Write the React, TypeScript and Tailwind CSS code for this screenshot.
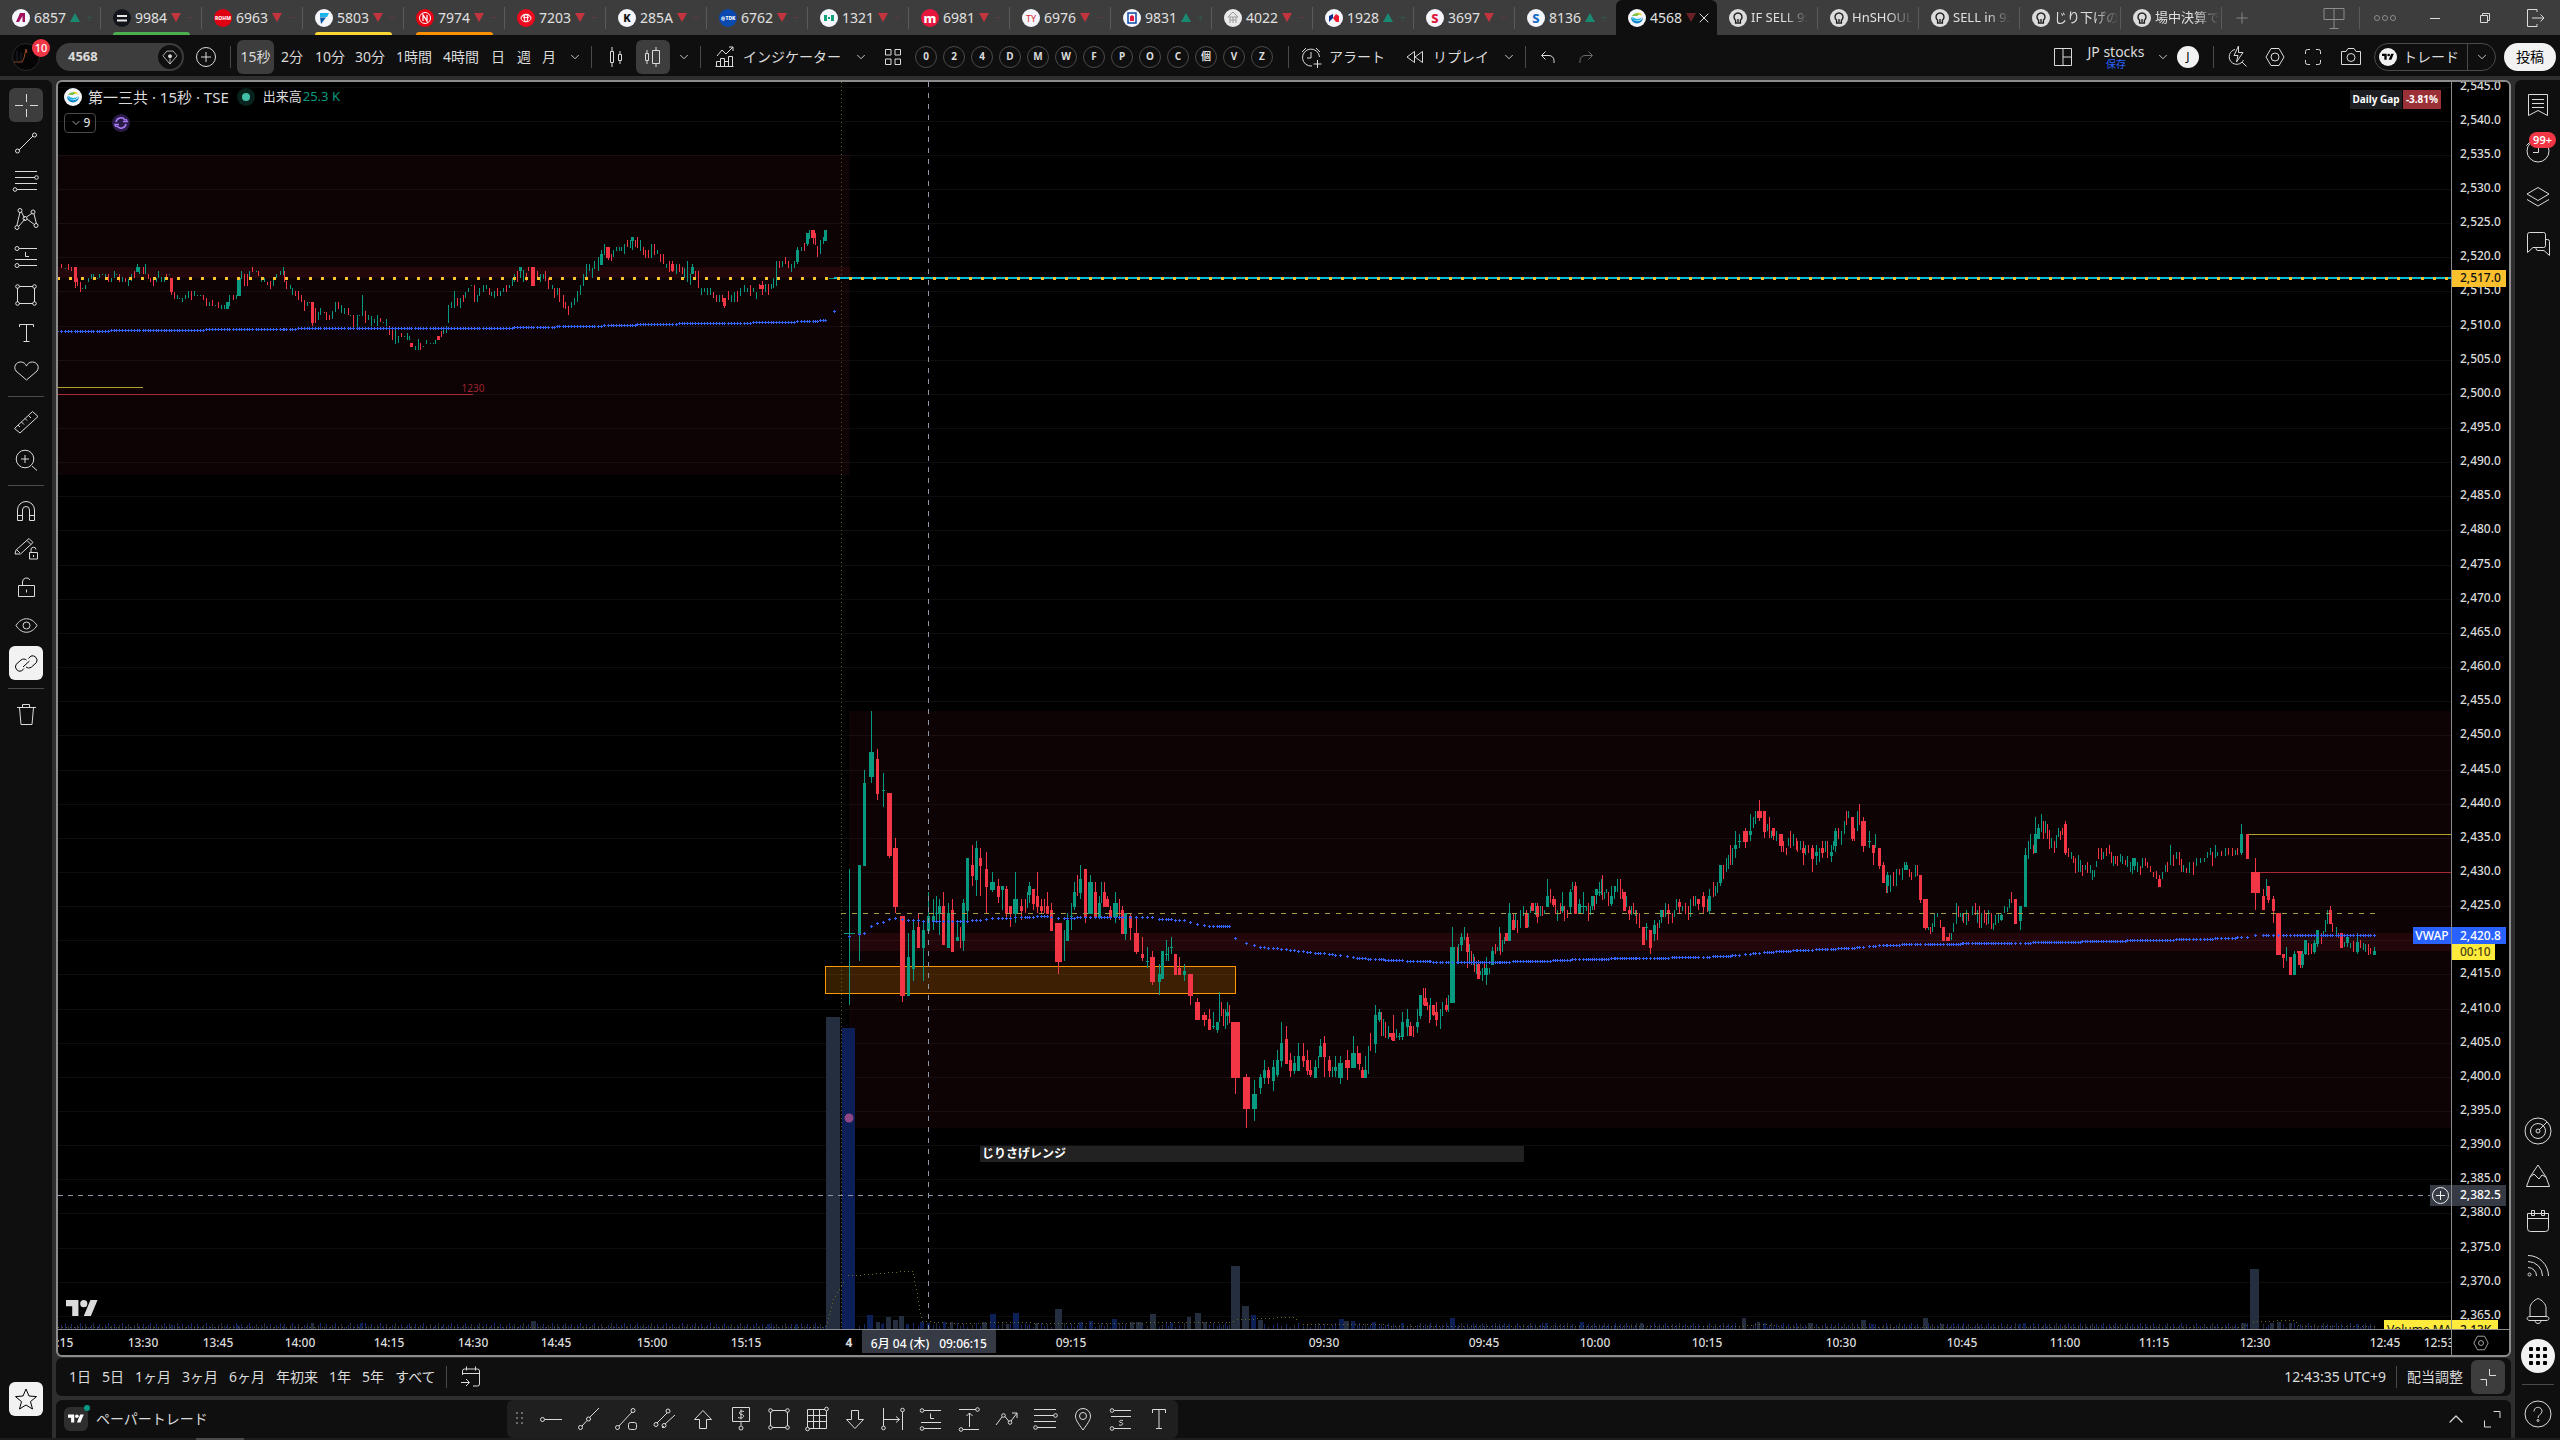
import React from 'react';
import clsx from 'clsx';
import { ChevronDown, ChevronUp, X, Plus } from 'lucide-react';

const UP = '#089981';
const DOWN = '#f23645';

/* ---------- icons ---------- */

interface IcoProps {
  d?: string;
  dots?: number[][];
  size?: number;
  fill?: string;
  children?: React.ReactNode;
}

// line icons share a 28px grid
function Ico({ d, dots = [], size = 28, fill = 'none', children }: IcoProps) {
  return (
    <svg width={size} height={size} viewBox="0 0 28 28" fill={fill} stroke="currentColor" className="shrink-0" aria-hidden="true">
      {d && <path d={d} />}
      {dots.map(([cx, cy, r], i) => <circle key={i} cx={cx} cy={cy} r={r || 1.5} />)}
      {children}
    </svg>
  );
}

const Down = ({ size = 14 }: { size?: number }) => <ChevronDown size={size} strokeWidth={1.5} className="shrink-0" />;

const TvMark = ({ size = 18 }: { size?: number }) => (
  <svg width={size} height={size} viewBox="0 0 36 28" fill="currentColor" aria-hidden="true">
    <path d="M14 22H7V11H0V4h14v18zM28 22h-8l7.5-18h8L28 22z" />
    <circle cx="20" cy="8" r="4" />
  </svg>
);

/* ---------- tabs ---------- */

interface Tab {
  name: string;
  dir?: 'up' | 'down';
  bg: string;
  line?: string;
  active?: boolean;
  logo: React.ReactNode;
}

const mark = (text: string, fill: string, size = 9) => (
  <text x="9" y={9 + size * 0.36} textAnchor="middle" fontSize={size} fontWeight="800" fill={fill}>{text}</text>
);

const bulb = (
  <g fill="none" stroke="#222" strokeWidth="1.4">
    <path d="M6.6 11.2a4 4 0 1 1 4.8 0V14H6.600z" />
    <path d="M9 10v3" />
  </g>
);

const tabs: Tab[] = [
  { name: '6857', dir: 'up', bg: '#f4f6fb', logo: <path d="M4 13 8 4h5v9h-2.500V7L7 13z" fill="#a0105f" /> },
  { name: '9984', dir: 'down', bg: '#12161c', line: 'bg-[#4caf50]', logo: <path d="M4 6h10v2H4zM4 10.500h10v2H4z" fill="#e8e8e8" /> },
  { name: '6963', dir: 'down', bg: '#e00012', logo: mark('ROHM', '#fff', 5) },
  { name: '5803', dir: 'down', bg: '#f4f6fb', line: 'bg-[#fdd835]', logo: <g><path d="M5 4h9l-2 4H5z" fill="#19b5ea" /><path d="M5 8.500h6L6 15z" fill="#0b57a4" /></g> },
  { name: '7974', dir: 'down', bg: '#e60012', line: 'bg-[#ff9100]', logo: <g fill="none" stroke="#fff"><circle cx="9" cy="9" r="5.500" /><path d="M7 12V6l4 6V6" strokeWidth="1.3" /></g> },
  { name: '7203', dir: 'down', bg: '#eb0a1e', logo: <g fill="none" stroke="#fff"><ellipse cx="9" cy="9" rx="5" ry="3.800" /><ellipse cx="9" cy="9" rx="1.800" ry="3.600" /><ellipse cx="9" cy="7.200" rx="3.500" ry="1.500" /></g> },
  { name: '285A', dir: 'down', bg: '#f4f6fb', logo: mark('K', '#111', 11) },
  { name: '6762', dir: 'down', bg: '#0a4ab0', logo: mark('⊕TDK', '#fff', 5) },
  { name: '1321', dir: 'down', bg: '#f4f6fb', logo: <path d="M4 6h3v6H4zM11 6h3v6h-3zM8 8h2v2H8z" fill="#12a277" /> },
  { name: '6981', dir: 'down', bg: '#e5173f', logo: mark('m', '#fff', 13) },
  { name: '6976', dir: 'down', bg: '#f4f6fb', logo: <text x="9" y="12.500" textAnchor="middle" fontSize="9" fill="#d8262c">TY</text> },
  { name: '9831', dir: 'up', bg: '#f4f6fb', logo: <g><path d="M5 4h8v10H5z" fill="none" stroke="#0d49a5" strokeWidth="1.500" /><path d="M7 7.500 9 6l2 1.500V12H7z" fill="#e5173f" /></g> },
  { name: '4022', dir: 'down', bg: '#e9e9e9', logo: <g fill="none" stroke="#9a9a9a"><path d="M9 3 4 8h10zM6 8v6M12 8v6M6 11h6M9 8v6" /></g> },
  { name: '1928', dir: 'up', bg: '#f4f6fb', logo: <g><path d="M4 13V7l4-2v4z" fill="#0b2f8a" /><path d="m8 9 3-4 3 2v6h-3z" fill="#ee1c2e" /></g> },
  { name: '3697', dir: 'down', bg: '#f4f6fb', logo: mark('S', '#e0173a', 13) },
  { name: '8136', dir: 'up', bg: '#f4f6fb', logo: mark('S', '#1c6fc4', 13) },
  { name: '4568', dir: 'down', bg: '#f4f6fb', active: true, logo: <DaiichiLogo /> },
  { name: 'IF SELL 9:', bg: '#dcdcdc', logo: bulb },
  { name: 'HnSHOUL', bg: '#dcdcdc', logo: bulb },
  { name: 'SELL in 9:', bg: '#dcdcdc', logo: bulb },
  { name: 'じり下げの', bg: '#dcdcdc', logo: bulb },
  { name: '場中決算で', bg: '#dcdcdc', logo: bulb },
];

function DaiichiLogo() {
  return (
    <g>
      <path d="M3 8c0 8.500 12 8.500 12 0-1 5-9 6-12 0z" fill="#0a86c9" />
      <path d="M4 7.500c0 5 7 6 10 1-3 2-7 2-10-1z" fill="#17b1e7" />
      <path d="M4 7c2-3 6-4 9-2-2 0-3 2-5 2z" fill="#7cc142" />
      <path d="M9 4c3-1 5 1 5 3-1-1-3-2-5-3z" fill="#f3d21a" />
    </g>
  );
}

function TabItem({ tab }: { tab: Tab }) {
  return (
    <button
      className={clsx(
        'relative flex h-[35px] w-[101px] shrink-0 items-center pl-3 text-sm whitespace-nowrap text-[#e0e0e0]',
        tab.active && 'rounded-t-md bg-[#0f0f0f]'
      )}
    >
      <svg width="18" height="18" viewBox="0 0 18 18" className="mr-1 shrink-0" aria-hidden="true">
        <circle cx="9" cy="9" r="9" fill={tab.bg} />
        {tab.logo}
      </svg>
      {tab.dir ? (
        <>
          <span>{tab.name}</span>
          <svg width="10" height="9" viewBox="0 0 10 9" className={clsx('ml-1', tab.active && 'opacity-50')} aria-hidden="true">
            {tab.dir === 'up' ? <path d="M5 0l5 9H0z" fill="#1a8a72" /> : <path d="M0 0h10L5 9z" fill="#c2343e" />}
          </svg>
          {tab.active ? (
            <X size={16} strokeWidth={1.5} className="shrink-0" />
          ) : (
            <span className={clsx('ml-1.5 text-xs opacity-30', tab.dir === 'up' ? 'text-[#1a8a72]' : 'text-[#c2343e]')}>
              {tab.dir === 'up' ? '+' : '−'}
            </span>
          )}
        </>
      ) : (
        <span className="mask-r-from-60% text-[13px]">{tab.name}</span>
      )}
      {tab.line && <span className={clsx('absolute bottom-0 left-3 h-[3px] w-[77px] rounded-t-sm', tab.line)} />}
      {!tab.active && tab.name !== '8136' && <span className="absolute top-[7px] right-0 h-[22px] w-px bg-[#5a5a5a]" />}
    </button>
  );
}

function TabBar() {
  return (
    <header className="flex h-[35px] shrink-0 items-center overflow-hidden bg-[#3d3d3d] text-[#8c8c8c]">
      {tabs.map((t) => <TabItem key={t.name} tab={t} />)}
      <button className="flex w-10 justify-center" title="新しいタブ"><Plus size={18} strokeWidth={1.2} /></button>
      <div className="flex-1" />
      <button className="flex w-[50px] justify-center" title="分割">
        <Ico d="M4 4.500h20v11H4zM14 4.500v20M9.500 24.500h9" />
      </button>
      <span className="h-[22px] w-px bg-[#5a5a5a]" />
      <button className="flex w-[50px] justify-center" title="その他">
        <Ico dots={[[6, 14, 2.5], [14, 14, 2.5], [22, 14, 2.5]]} />
      </button>
      <div className="flex text-[#dbdbdb]">
        <button className="flex w-[50px] justify-center" title="最小化"><Ico d="M9 14.500h10" /></button>
        <button className="flex w-[50px] justify-center" title="元のサイズ"><Ico d="M9.500 11.500h7v7h-7zM11.500 11.500v-2h7v7h-2" /></button>
        <button className="flex w-[50px] justify-center" title="終了"><Ico d="M16 8V5.500H6.500v17H16V20M11 14h12M19.500 10.500 23 14l-3.500 3.500" /></button>
      </div>
    </header>
  );
}

/* ---------- top toolbar ---------- */

const Sep = ({ className = '' }: { className?: string }) => <span className={clsx('h-[22px] w-px shrink-0 bg-[#4a4a4a]', className)} />;

const intervals = [
  ['15秒', 'w-[37px] bg-[#3d3d3d]'],
  ['2分', 'w-9'],
  ['10分', 'w-10'],
  ['30分', 'w-10'],
  ['1時間', 'w-12'],
  ['4時間', 'w-[46px]'],
  ['日', 'w-7'],
  ['週', 'w-6'],
  ['月', 'w-[26px]'],
];

const templates = ['0', '2', '4', 'D', 'M', 'W', 'F', 'P', 'O', 'C', '個', 'V', 'Z'];

function Toolbar() {
  return (
    <div className="flex h-[41px] shrink-0 items-center overflow-hidden bg-[#0f0f0f] pt-0.5 text-sm whitespace-nowrap text-[#dbdbdb]">
      <button className="relative flex w-14 shrink-0 pl-3" title="メニュー">
        <svg width="28" height="28" viewBox="0 0 28 28" aria-hidden="true">
          <circle cx="14" cy="14" r="13.500" fill="#050505" stroke="#2a2a2a" />
          <path d="M2 19h8l2-4 2-9 1 4" fill="none" stroke="#9c4a1f" />
          <path d="M5 8v12M9 10v9" stroke="#1c2530" />
        </svg>
        <span className="absolute -top-1 left-8 flex size-[18px] items-center justify-center rounded-full bg-[#f23645] text-[11px] font-medium text-white">10</span>
      </button>
      <button className="flex h-7 w-32 shrink-0 items-center justify-between rounded-full bg-[#3d3d3d] pr-0.5 pl-3 text-[13px] font-bold">
        4568
        <span className="flex size-6 items-center justify-center rounded-full bg-[#0f0f0f]">
          <Ico size={22} d="M10 6.500h8l5 6-9 10.500-9-10.500zM14 16v6.500"><circle cx="14" cy="13" r="2" fill="currentColor" /></Ico>
        </span>
      </button>
      <button className="flex w-11 shrink-0 justify-center" title="比較"><Ico d="M14 9v10M9 14h10"><circle cx="14" cy="14" r="9.500" /></Ico></button>
      <Sep className="mr-1.5 ml-0.5" />
      {intervals.map(([label, cls]) => (
        <button key={label} className={clsx('h-[34px] shrink-0 rounded-md', cls)}>{label}</button>
      ))}
      <button className="flex w-[26px] shrink-0 justify-center" title="時間足"><Down /></button>
      <Sep className="mr-1.5 ml-[3px]" />
      <button className="flex w-9 shrink-0 justify-center" title="ローソク足"><Ico d="M8.500 8.500h3v11h-3zM10 8.500V4M10 19.500V24M16.500 11.500h3v6h-3zM18 11.500V8M18 17.500V21" /></button>
      <button className="ml-0.5 flex h-[34px] w-[34px] shrink-0 items-center justify-center rounded-md bg-[#3d3d3d]" title="出来高ローソク足">
        <Ico d="M6.500 10.500h3v7h-3zM8 10.500V7M8 17.500V21M13.500 7.500h7v13h-7zM17 7.500V4M17 20.500V24" />
      </button>
      <button className="flex w-7 shrink-0 justify-center" title="チャートタイプ"><Down /></button>
      <Sep className="mr-1 ml-0.5" />
      <button className="flex w-36 shrink-0 items-center gap-1 pl-1.5">
        <Ico d="M5.500 23.500v-5h4v5M9.500 23.500v-8h4v8M13.500 23.500v-5h4v5M17.500 23.500v-10h4v10M4.500 23.500h18M6 13l5-6 4 4 7-7M18 4h4v4" />
        インジケーター
      </button>
      <button className="flex w-6 shrink-0 justify-center" title="お気に入り"><Down /></button>
      <button className="flex w-10 shrink-0 justify-center" title="テンプレート"><Ico d="M6.500 6.500h5.500v5.500H6.500zM16 6.500h5.500v5.500H16zM6.500 16h5.500v5.500H6.500zM16 16h5.500v5.500H16z" /></button>
      <div className="ml-0.5 flex shrink-0 gap-1.5">
        {templates.map((t) => (
          <button key={t} className="flex size-[22px] items-center justify-center rounded-full border border-[#4a4a4a] text-[10px] font-bold">{t}</button>
        ))}
      </div>
      <Sep className="mr-2 ml-[15px]" />
      <button className="flex shrink-0 items-center gap-1">
        <Ico d="M22.500 14A8.500 8.500 0 1 0 15 23M14 9v6h-4M5 9l4-4M23 9l-4-4M20.500 17v8M16.500 21h8" />
        アラート
      </button>
      <button className="ml-4 flex shrink-0 items-center gap-1">
        <Ico d="M13.500 8.500v11L6 14zM21.500 8.500v11L14 14z" />
        リプレイ
      </button>
      <button className="ml-1.5 flex w-7 shrink-0 justify-center" title="リプレイ設定"><Down /></button>
      <Sep className="mr-1.5 ml-0.5" />
      <button className="flex w-8 shrink-0 justify-center" title="元に戻す"><Ico d="M11.500 8.500 7.500 12.500l4 4M8 12.500h7a5 5 0 0 1 5 5V20" /></button>
      <button className="ml-1.5 flex w-8 shrink-0 justify-center text-[#6b6b6b]" title="やり直す"><Ico d="m16.500 8.500 4 4-4 4M20 12.500h-7a5 5 0 0 0-5 5V20" /></button>

      <div className="flex-1" />

      <button className="flex w-9 shrink-0 justify-center" title="レイアウト"><Ico d="M5.500 5.500h17v17h-17zM14 5.500v17M14 14h8.500" /></button>
      <button className="flex w-[70px] shrink-0 flex-col items-center leading-none">
        <span className="leading-[15px]">JP stocks</span>
        <span className="text-[10px] leading-[10px] text-[#2962ff]">保存</span>
      </button>
      <button className="flex w-6 shrink-0 justify-center" title="レイアウト管理"><Down /></button>
      <span className="ml-0.5 flex size-[22px] shrink-0 items-center justify-center rounded-full bg-[#f2f2f2] text-xs text-black">J</span>
      <Sep className="mr-1 ml-3.5" />
      <div className="flex shrink-0">
        <button className="flex w-[38px] justify-center" title="クイック検索"><Ico d="M12 6.500A7.500 7.500 0 1 0 20.500 17M19 19l4.500 4.500M15.500 3 11 12.500h4L13.500 19 20 9.500h-4.500z" /></button>
        <button className="flex w-[38px] justify-center" title="設定"><Ico d="M10 5.500h8l5 8.500-5 8.500h-8L5 14z" dots={[[14, 14, 4]]} /></button>
        <button className="flex w-[38px] justify-center" title="全画面"><Ico d="M6.500 11V8.500a2 2 0 0 1 2-2H11M17 6.500h2.500a2 2 0 0 1 2 2V11M21.500 17v2.500a2 2 0 0 1-2 2H17M11 21.500H8.500a2 2 0 0 1-2-2V17" /></button>
        <button className="flex w-[38px] justify-center" title="スナップショット"><Ico d="M4.500 8.500H9l2-3h6l2 3h4.500v13h-19z" dots={[[14, 14.5, 4]]} /></button>
      </div>
      <div className="ml-1 flex h-7 shrink-0 items-center rounded-full border border-[#4a4a4a]">
        <button className="flex items-center gap-1.5 pr-2 pl-1">
          <span className="flex size-[18px] items-center justify-center rounded-full bg-[#f2f2f2] text-black"><TvMark size={12} /></span>
          トレード
        </button>
        <span className="h-7 w-px bg-[#4a4a4a]" />
        <button className="flex w-[27px] justify-center" title="ブローカー"><Down /></button>
      </div>
      <button className="mr-1 ml-2 h-7 w-[52px] shrink-0 rounded-full bg-[#f2f2f2] text-black">投稿</button>
    </div>
  );
}

/* ---------- left drawing tools ---------- */

function Tool({ title, on, light, children }: { title: string; on?: boolean; light?: boolean; children: React.ReactNode }) {
  return (
    <button
      title={title}
      className={clsx('flex size-[34px] shrink-0 items-center justify-center rounded-md', on && 'bg-[#3d3d3d]', light && 'bg-[#f2f2f2] text-black')}
    >
      {children}
    </button>
  );
}

const SideSep = () => <span className="my-1 h-px w-9 shrink-0 bg-[#4a4a4a]" />;

function LeftTools() {
  return (
    <aside className="flex w-[52px] shrink-0 flex-col items-center gap-1 rounded-tr-md bg-[#0f0f0f] pt-2 pb-[22px] text-[#dbdbdb]">
      <Tool title="十字" on><Ico d="M14.500 3v8M14.500 18v8M3 14.500h8M18 14.500h8" /></Tool>
      <Tool title="トレンドライン"><Ico d="M7 21 21 7" dots={[[5.5, 22, 2], [22.5, 6, 2]]} /></Tool>
      <Tool title="フィボナッチ"><Ico d="M3 4.500h22M3 10.500h20M3 16.500h22M5 22.500h20" dots={[[24.5, 10.5, 1.8], [3, 22.5, 1.8]]} /></Tool>
      <Tool title="パターン"><Ico d="M5 20 8 7M9.500 7l3 6M14.500 12l6-4M22 9l2.500 10M7 21l6-7M15 14l8 6" dots={[[5, 22.5, 2], [8, 5.5, 2], [13, 13.5, 2], [21, 7, 2], [24, 20.5, 2]]} /></Tool>
      <Tool title="予測"><Ico d="M7 5.500h18M3 16.500h22M7 22.500h18M13.500 9v4.500H17" dots={[[5, 5.5, 2], [5, 22.5, 2]]} /></Tool>
      <Tool title="図形"><Ico d="M7 5.500h14M7 22.500h14M5.500 7v14M22.500 7v14" dots={[[5.5, 5.5, 1.8], [22.5, 5.5, 1.8], [5.5, 22.5, 1.8], [22.5, 22.5, 1.8]]} /></Tool>
      <Tool title="テキスト"><Ico d="M7.500 8V5.500h14V8M14.500 5.500v17M11.500 22.500h6" /></Tool>
      <Tool title="アイコン"><Ico d="M14.500 23 4 14c-3-4 0-9 4.500-9 3 0 5 1.500 6 4 1-2.500 3-4 6-4 4.500 0 7.500 5 4.500 9z" /></Tool>
      <SideSep />
      <Tool title="計測"><Ico d="M2.500 20.500 20.500 3.500l5.500 5L8 25zM6 17l2 2M9.500 14l2.500 2.500M13 10.500l2 2M16.500 7.500 19 10" /></Tool>
      <Tool title="ズーム"><Ico d="M20 20l5 4.500M13 9v8M9 13h8" dots={[[13, 13, 8.8]]} /></Tool>
      <SideSep />
      <Tool title="マグネット"><Ico d="M5.500 23.500V13a8.500 8.500 0 0 1 17 0v10.500h-5V13a3.500 3.500 0 0 0-7 0v10.500zM5.500 18.500h5M17.500 18.500h5" /></Tool>
      <Tool title="描画モード維持"><Ico d="m3 19 1-4L17 3.500l4 4L8.500 19zM5 15l3 3M15 5.500l4 4M17.500 17.500h8v6.500h-8zM19 17.500V15a2.500 2.500 0 0 1 5-.5M21.500 20v2" /></Tool>
      <Tool title="ロック"><Ico d="M6.500 12.500h16v11h-16zM10.500 12.500V9a4 4 0 0 1 7.500-2M14.500 16.500v3" /></Tool>
      <Tool title="表示"><Ico d="M4 14.500c5.500-9 15.500-9 21 0-5.500 9-15.500 9-21 0z" dots={[[14.5, 14.5, 3.5]]} /></Tool>
      <Tool title="同期" light><Ico d="M12 19.500 9.500 22A4.600 4.600 0 0 1 4 15.500l5-4.500c2-1.500 4-1 5.500 0M16.500 9.500 19 7a4.600 4.600 0 0 1 5.500 6.500l-5 4.500c-2 1.500-4 1-5.500 0M11 18l6.500-6" /></Tool>
      <SideSep />
      <Tool title="削除"><Ico d="M5 7.500h19M10.500 7.500v-3h7v3M7.500 7.500l1.500 17h11l1.500-17" /></Tool>
      <div className="flex-1" />
      <Tool title="お気に入り" light><Ico d="m14 4 3 7 7.500.600-6 5 2 7.400-6.500-4-6.500 4 2-7.400-6-5L11 11z" /></Tool>
    </aside>
  );
}

/* ---------- right sidebar ---------- */

function RightBar() {
  const cell = 'relative flex h-[45px] w-full shrink-0 items-center justify-center';
  return (
    <aside className="flex w-[45px] shrink-0 flex-col items-center rounded-tl-md bg-[#0f0f0f] pt-0.5 pb-0.5 text-[#dbdbdb]">
      <div className="flex w-full flex-col gap-px">
        <button className={cell} title="ウォッチリスト"><Ico d="M4.500 3.500h19v21L14 19.500l-9.500 5zM8 8.500h12M8 12.500h12M8 16.500h12" /></button>
        <button className={cell} title="アラート">
          <Ico d="M14.500 9v6.500H9M2.500 8.500 6 5" dots={[[14, 14, 11]]} />
          <span className="absolute top-1 right-1 rounded-full bg-[#f23645] px-1 text-[11px] leading-4 font-semibold text-white">99+</span>
        </button>
        <button className={cell} title="オブジェクトツリー"><Ico d="m14 4.500 11 6.500-11 6.500L3 11zM3 16.500 14 23l11-6.500" /></button>
        <button className={cell} title="チャット"><Ico d="M5.500 3.500h14a2 2 0 0 1 2 2v11a2 2 0 0 1-2 2H9l-5.500 5v-18a2 2 0 0 1 2-2zM21.500 10.500h2a2 2 0 0 1 2 2v14L20 21.500h-6a2 2 0 0 1-2-2v-1" /></button>
      </div>
      <div className="flex-1" />
      <button className={cell} title="スクリーナー"><Ico dots={[[14, 14, 13], [14, 14, 7.5], [14, 14, 2]]} d="M15 13l8-8" /></button>
      <button className={cell} title="パイン"><Ico d="M14 3 6 15l4-3 5 5 3-4 4 2zM6 15l-3.500 9.500h23L22 15" /></button>
      <button className={cell} title="カレンダー"><Ico d="M3.500 6.500h21v15a3 3 0 0 1-3 3h-15a3 3 0 0 1-3-3zM3.500 11.500h21M7.500 3.500h3v5h-3zM17.500 3.500h3v5h-3z" /></button>
      <button className={cell} title="ニュース"><Ico d="M4 3.500A20.500 20.500 0 0 1 24.500 24M4 9.500A14.500 14.500 0 0 1 18.500 24M4 15.500A8.500 8.500 0 0 1 12.500 24" dots={[[5.5, 22.5, 1.5]]} /></button>
      <button className={cell} title="通知"><Ico d="M6 19.500V11c0-4 4-8 8-9.500 4 1.500 8 5.500 8 9.500v8.500M6 19.500h16c4 0 4 4 0 4H6c-4 0-4-4 0-4zM11 23.500c0 4 6 4 6 0" /></button>
      <button className={cell} title="製品">
        <span className="flex size-[34px] items-center justify-center rounded-full bg-[#f2f2f2] text-black">
          <svg width="20" height="20" viewBox="0 0 20 20" aria-hidden="true">
            {[0, 1, 2].map((r) => [0, 1, 2].map((c) => <rect key={`${r}${c}`} x={1 + c * 7} y={1 + r * 7} width="4" height="4" rx="1" />))}
          </svg>
        </span>
      </button>
      <span className="mt-1.5 h-px w-8 shrink-0 bg-[#4a4a4a]" />
      <button className={cell + ' mt-1.5'} title="ヘルプ"><Ico d="M10 11.500c0-6 8.500-5 8 0-.300 3-4 3-4 6.500" dots={[[14, 14, 13], [14, 20.5, 1]]} /></button>
    </aside>
  );
}

/* ---------- chart data ---------- */

// "x high low dir [bodyTop bodyBottom bodyWidth]"; every session keeps its own origin and scale
interface Session {
  x: number;
  y: number;
  kx: number;
  bars: string;
}

const sessions: Session[] = [
  {
    x: 50, y: 200, kx: 1.912,
    bars: `15 201 216 u,22 192 204 d,29 203 206 u,35 192 210 d,41 201 213 d,48 201 264 d 201 246 6,53 234 258 d,58 246 276 d,62 264 267 u,67 255 267 u,74 234 246 u,79 222 237 u,84 222 234 u,90 234 237 u,95 222 234 u,101 222 225 u,107 222 237 u,112 222 246 d,117 234 246 u,123 213 234 u,128 222 225 u,133 222 246 d,138 231 246 u,144 234 246 d,150 237 258 u,155 222 243 u,161 213 234 d,167 192 216 u 201 216 5,172 201 222 u,178 201 222 d,183 192 222 u,188 222 237 d,193 234 246 d,198 231 258 d,203 234 246 u,208 213 234 u,213 231 246 u,218 231 246 u,223 222 237 d,228 222 225 u,232 234 285 d 234 276 6,238 276 297 d,243 285 297 u,248 294 297 u,253 294 306 u,259 285 297 u,264 273 294 u,270 273 300 d,276 273 288 u,282 285 288 u,288 285 288 u,294 285 300 d,300 294 318 d,305 306 318 u,310 300 318 d,316 315 318 u,322 306 324 d,328 315 327 u,334 315 327 u,339 306 327 u 306 327 6,344 285 318 u,350 285 300 d,356 285 297 u,362 234 288 u 234 288 7,366 213 237 u,372 222 258 d,377 222 258 d,382 213 234 u,388 201 216 d,394 213 216 u,399 213 228 d,405 234 246 u,411 234 246 u,416 246 255 d,422 243 267 d,428 234 258 u,434 222 234 u,440 213 225 u,446 201 225 u,448 213 246 d,453 243 267 d,459 255 267 u,464 264 285 u,469 273 288 d,475 273 300 d,481 285 306 d,486 300 333 d,492 306 318 u,497 306 309 d,502 306 378 d 306 369 6,508 324 369 d,513 336 360 u,518 324 345 u,524 336 339 d,529 336 360 d,535 345 360 d,540 333 357 u,546 306 336 u,552 306 327 d,558 315 339 u,564 324 342 u,570 324 345 d,575 345 348 u,581 345 385 d,587 345 385 u,592 345 348 u,598 285 348 u,603 333 369 d,609 345 360 u,614 348 378 u,620 357 369 u,626 345 378 u,632 354 366 d,638 366 369 u,644 357 378 u,650 378 405 d,655 390 420 d,660 390 432 u,666 408 430 u,672 399 411 d,678 408 411 u,683 399 420 u,687 408 420 u,692 429 441 d 429 441 5,698 438 450 u,704 417 450 u,709 429 450 d,714 438 441 u,720 420 432 u,727 429 432 u,733 429 432 u,738 420 432 u,743 408 420 d 408 420 6,748 393 411 d,753 387 402 u,758 378 399 u,762 315 369 u,768 306 324 u,774 273 324 u,779 294 318 d,785 294 324 u,790 285 306 d,795 276 294 u,801 264 276 u,806 255 258 u,811 255 306 d,817 285 306 u,822 264 288 u,828 255 276 u,834 255 267 u,840 264 285 d,845 276 288 u,850 273 294 u,856 264 288 d,862 273 288 u,867 264 276 u,873 255 276 d,879 255 264 u,884 234 258 u,889 222 246 u,894 213 246 d,900 201 234 u 201 213 6,906 210 246 u,911 219 243 d,915 201 213 d,920 201 222 u,925 201 258 d 201 258 8,932 213 237 d,938 222 246 u,943 222 237 u,948 213 243 d,954 234 267 d,960 255 267 u,965 264 294 d,970 264 285 u,975 264 306 d,981 285 324 d,986 306 327 d,991 318 345 d,997 306 324 u,1003 294 315 u,1008 273 306 u,1014 255 285 u,1020 222 258 u,1026 192 237 u,1031 192 213 u,1037 204 234 u,1042 183 207 u,1048 171 213 u,1055 150 195 u 162 195 6,1061 132 165 u,1067 141 180 d 141 174 7,1073 162 183 d,1078 150 171 u,1083 141 153 u,1088 141 153 u,1093 141 153 u,1098 132 162 u,1104 120 141 d,1109 120 144 u,1114 111 150 u 111 123 6,1119 120 141 d,1123 111 144 d,1129 120 153 u,1134 141 165 d,1139 150 174 d,1144 150 174 d,1150 132 174 u,1156 132 165 d,1161 150 162 u,1167 162 186 d,1173 162 192 d,1179 192 204 u,1185 183 216 d,1191 183 216 d 192 213 6,1197 192 222 u,1203 192 216 d,1209 201 222 d,1214 204 234 u,1219 183 246 u,1225 222 255 u,1229 192 222 u 201 222 6,1235 213 237 d,1240 213 264 d,1245 264 285 u,1251 264 276 u,1257 264 285 u,1263 264 285 u,1268 276 294 d,1274 285 306 d,1280 285 306 u,1285 285 306 d,1290 294 324 d 294 318 6,1297 273 300 d,1303 285 306 u,1309 276 306 u,1315 273 306 d,1321 264 288 u,1327 255 276 u,1333 264 276 u,1339 255 288 d,1345 264 276 u,1350 276 297 u,1356 252 267 d,1362 243 285 d 255 267 7,1368 252 276 u,1373 252 285 d,1379 252 267 u,1384 234 264 u,1389 183 258 u,1395 183 204 d,1401 183 201 u,1407 171 192 d,1412 183 204 d,1418 192 216 u,1424 183 204 u,1429 141 192 u 150 186 6,1436 141 153 u,1442 129 153 d,1448 99 138 u 99 132 6,1453 90 117 u,1459 90 132 d 90 114 7,1464 99 135 d,1468 138 171 d,1473 120 162 u,1478 111 132 u,1482 90 123 u 90 123 4`,
  },
  {
    x: 780, y: 680, kx: 2.613,
    bars: `181 567 975 u 759 762 30,208 555 843 u 555 762 8,221 270 558 u 309 558 8,239 93 309 u 216 291 13,255 207 360 d 237 342 8,270 279 381 u 330 333 8,286 339 534 d 339 528 13,301 474 699 d 504 681 13,320 708 966 d 708 948 13,336 759 948 u 831 948 8,349 720 903 u 750 867 8,362 699 804 d 741 804 8,375 720 903 u 750 804 8,388 636 759 u 708 753 8,401 657 750 u 708 726 8,409 648 726 u 699 702 8,417 657 765 u 678 702 8,427 636 795 d 678 795 8,440 669 804 u 699 804 8,451 657 816 d 690 816 8,464 720 783 u 771 783 8,472 741 804 d,480 657 813 u 669 783 8,490 534 729 u 534 693 8,503 495 618 d 555 588 8,513 483 648 u 504 600 8,524 504 648 d 534 558 8,540 516 700 d 567 621 8,555 576 636 u 606 630 13,571 597 669 d 618 651 8,581 618 690 u 618 630 8,592 618 720 d 627 702 8,602 678 741 d 678 702 8,615 576 729 u 657 702 13,631 657 720 d 678 693 8,641 657 700 d,647 636 684 u,653 606 669 u 618 645 5,662 627 690 d 627 672 8,673 576 700 d 648 680 8,683 657 700 d 678 693 8,691 657 700 d,699 636 702 d 678 702 8,710 669 753 d 690 753 8,728 729 882 d 729 846 18,744 750 843 u,751 699 783 u 720 783 8,761 669 750 u 708 711 8,770 606 690 u 636 681 8,778 585 648 d,785 555 657 u 597 639 8,798 567 729 d 567 711 8,811 585 702 u 606 702 13,824 606 711 d 636 711 6,835 648 711 u 669 711 8,840 606 670 u,848 606 681 d 636 681 8,856 648 681 d 657 681 8,864 678 720 d 690 711 8,876 636 729 u 669 711 13,887 657 720 d,895 678 762 d 690 762 8,903 699 780 u 699 762 8,916 700 780 d 708 744 8,932 708 822 d 759 816 13,947 771 843 d 822 834 8,960 801 864 u 843 846 8,973 813 915 d 831 906 13,992 852 945 u 882 906 8,1000 813 897 u 813 897 8,1010 780 843 u 822 825 8,1015 801 843 u,1023 771 822 u 801 804 8,1033 822 885 d 822 885 8,1044 831 885 d 864 885 8,1057 852 903 u 873 885 8,1072 882 975 d 882 948 13,1091 954 1020 d 966 1020 13,1109 996 1038 d 1005 1020 13,1122 987 1050 d 1017 1050 8,1133 996 1047 u 1038 1041 8,1143 1026 1059 u 1026 1050 8,1148 936 1026 u,1153 966 1008 d,1159 987 1038 d,1164 987 1047 u,1169 966 1035 u 996 1008 8,1174 975 1029 d,1190 1026 1242 d 1026 1194 23,1219 1182 1344 d 1191 1287 18,1240 1200 1323 u 1242 1287 14,1256 1182 1242 u 1191 1224 8,1266 1140 1212 u 1170 1194 8,1277 1161 1212 d 1170 1194 8,1289 1140 1233 u 1161 1203 8,1300 1110 1191 u 1140 1185 8,1311 1026 1161 u 1089 1143 8,1324 1038 1152 d 1077 1152 8,1334 1119 1191 d 1140 1173 8,1344 1128 1182 u 1149 1173 8,1355 1089 1173 u 1128 1173 8,1368 1089 1161 d 1128 1143 8,1378 1110 1185 d 1140 1173 8,1386 1140 1191 d 1170 1185 8,1399 1140 1194 u 1161 1194 8,1407 1128 1164 u,1412 1077 1131 u 1098 1131 8,1423 1068 1191 d 1089 1131 8,1436 1128 1191 d 1140 1173 8,1444 1161 1191 u,1451 1128 1191 u 1161 1173 8,1464 1128 1212 u 1149 1194 13,1483 1110 1200 d 1140 1164 13,1498 1068 1164 u 1119 1164 13,1509 1098 1152 d,1514 1119 1170 d 1119 1152 8,1523 1161 1194 d 1170 1194 8,1530 1128 1194 u 1170 1194 8,1538 1098 1182 u,1544 1059 1113 d,1556 975 1119 u 1005 1092 8`,
  },
  {
    x: 1360, y: 780, kx: 2.45,
    bars: `48 687 726 u 696 720 8,53 696 768 d,58 717 768 u,63 726 775 d,70 738 778 u,76 759 780 d 759 770 10,82 705 782 d 760 782 8,90 747 775 u,96 760 780 u 768 771 8,104 696 780 u 726 771 8,116 687 768 u 717 741 8,124 726 768 d 738 768 4,131 738 771 d,141 687 759 u 726 741 8,148 645 717 u 645 708 8,155 624 675 d,161 624 678 d 654 678 8,166 666 690 d,170 675 729 d,172 654 720 u,179 675 708 d 675 705 5,187 666 738 d 696 720 8,197 687 747 u,203 666 708 u,212 654 696 d 675 690 8,217 645 696 u,226 441 669 u 501 669 13,238 501 546 d,242 492 545 u,248 459 513 u 471 495 8,256 441 480 u,263 459 564 d 471 516 8,268 492 552 u,273 513 555 d,277 522 555 u,281 531 576 d,285 549 582 u,290 540 597 d 552 597 8,295 573 585 u,300 564 603 u,304 549 585 d,310 531 615 u 564 585 9,317 564 582 u,324 501 555 u 513 555 7,332 492 522 d,337 501 513 u,342 441 513 u,344 459 525 d,349 480 516 u,353 471 492 u,358 459 483 d 459 483 5,366 369 483 u 399 483 8,377 399 450 d 420 450 5,382 402 444 u,386 420 459 d,393 390 444 u,400 378 408 u,407 390 444 d 399 444 5,413 399 441 u,418 378 399 u,423 369 393 d 369 393 6,431 369 405 u,435 369 429 d 378 411 8,441 378 408 u,446 378 408 d,452 390 402 u,459 297 381 u 348 381 6,467 327 369 d,473 348 381 d 357 375 4,479 357 402 d,484 390 423 u,490 369 399 d,496 336 399 u 378 393 8,502 378 423 d,508 390 414 d,515 327 402 u 336 381 6,521 306 330 u,528 306 402 d 318 402 8,537 357 399 u 372 399 5,547 336 402 u 378 381 16,556 378 393 u,560 369 423 d,564 378 405 u,569 348 390 u 348 378 4,574 348 390 d,579 327 372 u 327 345 5,587 306 348 u 336 339 12,592 297 345 u,594 285 360 d,599 336 357 u,605 327 339 u,610 336 378 d,616 318 378 u 348 372 8,623 318 357 u,627 318 336 u,631 297 336 u,637 297 357 d,642 327 357 d,648 336 393 d 336 393 8,654 348 381 u,660 378 420 d 390 402 8,665 378 405 u,669 369 402 d,674 390 408 u,678 390 432 d,684 399 444 d,694 441 495 d 441 495 8,702 429 480 u 441 444 8,711 450 522 d 450 504 8,721 420 483 u 435 462 4,729 429 480 d,733 420 444 u,738 390 430 u 390 411 4,743 390 411 d,748 369 411 u,757 372 432 d 390 402 5,766 399 430 d,770 390 411 u,775 357 390 u,782 357 402 d 366 381 8,790 378 393 u,797 369 402 d,805 378 420 d,810 357 411 u,817 348 378 d,822 348 378 u,829 357 390 d 357 372 8,841 336 402 d 348 381 8,851 357 396 d,856 327 402 u 348 393 8,866 306 351 d,871 318 348 u,877 306 340 u,883 255 318 u 255 309 8,891 255 297 d,897 234 276 u,902 225 267 u,907 195 255 d,913 204 255 u,920 153 234 u 195 207 8,930 162 204 u 183 186 8,944 144 204 d 153 186 13,957 102 183 u 153 165 8,965 111 144 u,969 93 132 u,979 60 123 d 93 114 13,991 93 174 d 93 156 8,998 132 153 u,1003 111 174 d,1008 153 174 u,1013 144 180 d 144 168 5,1021 153 183 u,1028 162 186 u,1033 162 216 d 162 198 9,1038 183 216 d,1045 204 225 d,1050 174 198 u,1055 153 204 d,1062 162 198 u,1069 174 210 d,1072 183 216 d,1079 183 210 u,1086 183 255 d 204 219 8,1092 195 225 u,1098 195 219 d,1108 195 276 d 204 237 8,1118 195 255 u 216 228 8,1126 204 246 u,1133 183 234 d 204 219 8,1140 183 216 u,1145 183 234 d,1155 195 246 u 216 228 8,1160 183 210 u,1165 144 216 u 153 198 8,1173 144 177 d,1180 153 195 u,1187 123 162 u,1193 93 135 d,1198 93 114 u,1206 111 183 d 111 177 7,1212 144 183 d,1218 93 153 u,1224 72 135 d,1233 111 216 d 123 198 13,1248 153 204 u 183 186 8,1258 195 255 d 195 219 8,1263 162 205 u,1272 204 267 d 204 258 7,1283 246 309 d 255 309 7,1289 300 339 d,1293 276 339 u 285 318 7,1300 285 336 u,1307 276 318 d,1314 267 318 u,1321 267 285 d,1328 264 300 u,1334 246 270 u,1340 246 270 u 255 270 6,1347 267 290 d,1352 276 300 d,1360 255 290 u,1366 255 288 d,1373 285 369 d 285 360 7,1385 357 450 d 357 444 12,1392 441 450 u,1398 441 462 d,1402 430 456 u,1408 399 441 u,1414 399 411 u,1421 420 444 d,1429 441 483 d 441 483 8,1440 471 483 d 471 483 8,1444 459 483 d,1450 459 480 u,1455 429 456 u,1461 369 432 u,1466 378 411 d,1471 399 411 u,1475 399 423 u,1479 399 430 d,1485 390 435 u,1492 399 423 d,1500 378 405 u,1508 369 405 d,1513 390 430 u,1518 378 445 d,1523 400 444 u,1530 390 429 d,1534 399 435 d,1541 390 432 u,1547 400 447 d,1552 429 450 u,1558 405 435 u,1564 399 430 u`,
  },
  {
    x: 2000, y: 780, kx: 2.8,
    bars: `3 399 423 u 405 420 5,12 378 400 u,20 380 396 u,27 357 385 u,33 336 369 d,43 357 432 d 357 432 8,57 378 450 u 378 423 8,71 204 381 u 225 381 8,79 183 237 u,85 162 207 u,94 195 222 d,100 111 219 u 162 219 8,108 132 177 u 144 177 6,117 102 156 u,122 123 177 d,128 123 160 u,134 132 177 d,139 150 207 d,145 174 205 u,153 183 219 d,158 165 204 u,164 144 170 u,170 153 180 d,176 144 165 d,183 123 225 d 132 219 8,192 204 230 d,200 216 237 u,206 228 250 d,212 234 279 d,219 225 276 u,225 240 276 u,231 255 288 d,240 255 270 u,246 246 279 d,252 255 280 u,258 270 300 u,264 270 290 u,270 243 260 u,276 204 237 d,284 204 240 d,290 216 237 u,297 204 228 d,306 195 222 d,312 216 250 d,318 228 258 u,324 228 252 d,330 228 258 d,337 222 246 u,344 228 252 u,350 240 255 d,357 228 262 u,364 246 276 u,371 234 282 u,377 234 270 u 234 258 10,385 246 276 u,392 258 285 d,400 234 264 u,406 234 258 d,412 246 264 d,420 258 276 d,430 276 291 d,438 273 297 d,447 285 321 d 297 321 8,455 276 297 u,463 255 276 u,470 246 276 d,477 195 255 u,487 225 258 d,495 216 237 u,502 216 255 d,508 237 276 d,515 255 276 u,522 264 279 d,530 246 280 u,541 246 285 d,550 234 258 u,560 234 250 u,572 234 246 u,582 216 234 u,590 204 225 u,595 216 258 d,602 195 234 u,610 216 228 u,620 213 228 d,632 204 228 u,640 204 225 d,650 204 228 d,658 210 224 u,666 204 225 d,676 132 225 u 162 219 8,693 162 237 d 162 237 8,715 234 390 d 276 339 25,737 327 390 d 348 390 9,747 297 348 u,752 318 369 d 318 360 8,766 348 429 d 357 393 8,780 399 525 d 399 525 13,794 522 564 d 522 534 8,803 501 543 u,814 531 585 d 531 585 9,824 513 585 u 522 585 8,834 513 520 d,841 513 564 d 513 555 10,848 513 564 u 522 555 6,856 480 525 u 480 522 6,864 489 525 d,873 492 522 d,880 480 522 u 489 516 8,889 450 500 u 450 492 8,899 459 492 d,905 453 468 u,912 420 455 u,918 390 432 u,925 378 432 d 390 432 8,931 430 456 d,941 441 468 u,948 459 474 d,956 459 504 d 459 504 7,965 486 500 u,974 465 501 u 471 489 6,982 489 505 u,990 483 516 d,1001 459 522 u 486 516 7,1010 480 504 d,1018 489 510 u,1024 492 515 u,1031 492 525 d,1038 504 522 d,1048 501 525 u 513 525 7`,
  },
];

interface Candle {
  x: number;
  high: number;
  low: number;
  color: string;
  top?: number;
  bottom?: number;
  width?: number;
}

const candles: Candle[] = sessions.flatMap((s) =>
  s.bars.split(',').map((row) => {
    const [x, hi, lo, dir, top, bottom, w] = row.trim().split(' ');
    const y = (v: string) => Math.round(s.y + Number(v) / 3);
    return {
      x: Math.floor(s.x + Number(x) / s.kx),
      high: y(hi),
      low: y(lo),
      color: dir === 'u' ? UP : DOWN,
      ...(w ? { top: y(top), bottom: y(bottom), width: Math.max(3, Math.round(Number(w) / s.kx)) } : {}),
    };
  })
);

const vwapPoints = [
  [58, 331], [109, 331], [110, 330], [203, 330], [204, 329], [297, 329], [298, 328], [513, 328], [514, 327], [556, 327], [557, 326], [603, 326], [604, 325], [636, 325], [637, 324], [677, 324], [678, 323], [751, 323], [752, 322], [795, 322], [796, 321], [818, 321], [819, 320], [828, 320],
  [849, 936], [864, 933], [871, 926], [877, 923], [883, 922], [889, 919], [895, 918], [908, 920], [930, 921], [963, 921], [980, 920], [995, 918], [1025, 917], [1048, 916], [1059, 918], [1090, 917], [1150, 917], [1160, 919], [1185, 920], [1197, 924], [1213, 926], [1232, 926],
  [1235, 938], [1246, 943], [1260, 947], [1275, 948], [1300, 951], [1320, 953], [1340, 955], [1360, 958], [1392, 960], [1420, 961], [1445, 962], [1480, 962], [1540, 961], [1580, 959], [1640, 958], [1700, 957], [1740, 955], [1765, 952], [1800, 950], [1850, 948], [1880, 945], [1920, 944], [2000, 943], [2060, 942], [2100, 941], [2150, 940], [2200, 939], [2249, 937], [2255, 935], [2376, 935],
];

const vwapAt = (x: number) => {
  const i = Math.max(1, vwapPoints.findIndex((p) => p[0] >= x));
  const [x0, y0] = vwapPoints[i - 1];
  const [x1, y1] = vwapPoints[i];
  return Math.round(y0 + ((x - x0) / (x1 - x0)) * (y1 - y0));
};

const vwapPath = [...candles.map((c) => [c.x, vwapAt(c.x)]), [834, 311]]
  .map(([x, y]) => `M${x - 1} ${y}h3v1h-3zM${x} ${y - 1}h1v3h-1z`)
  .join('');

// [x, top, width, tone]
const volumes: [number, number, number, 'b' | 'g'][] = [
  [171, 1325, 2, 'b'], [237, 1325, 2, 'b'], [311, 1323, 3, 'g'], [360, 1323, 3, 'b'], [531, 1321, 5, 'g'], [767, 1324, 3, 'b'], [795, 1324, 3, 'b'],
  [826, 1017, 14, 'g'], [842, 1028, 13, 'b'],
  [867, 1315, 6, 'b'], [876, 1322, 4, 'g'], [881, 1324, 3, 'b'], [886, 1317, 5, 'g'], [893, 1320, 5, 'g'], [899, 1316, 5, 'g'], [906, 1324, 3, 'b'], [920, 1322, 4, 'b'], [927, 1323, 3, 'b'], [943, 1322, 3, 'b'], [950, 1322, 3, 'g'], [982, 1322, 4, 'g'],
  [990, 1314, 6, 'b'], [1006, 1324, 3, 'g'], [1013, 1313, 6, 'b'], [1035, 1323, 3, 'g'], [1055, 1309, 7, 'g'], [1079, 1322, 4, 'b'], [1089, 1321, 4, 'b'], [1112, 1319, 5, 'b'], [1130, 1322, 4, 'g'], [1136, 1322, 6, 'g'], [1150, 1314, 6, 'g'], [1170, 1323, 3, 'b'], [1187, 1317, 4, 'g'], [1195, 1313, 6, 'g'], [1203, 1322, 4, 'g'],
  [1231, 1266, 9, 'g'], [1242, 1306, 7, 'g'], [1251, 1315, 5, 'b'], [1258, 1320, 5, 'g'], [1339, 1319, 5, 'b'], [1344, 1321, 5, 'g'], [1351, 1321, 4, 'b'], [1372, 1322, 4, 'b'], [1401, 1323, 3, 'b'], [1450, 1318, 5, 'b'], [1508, 1324, 2, 'b'], [1545, 1323, 3, 'b'], [1580, 1322, 4, 'b'], [1640, 1323, 3, 'g'],
  [1742, 1318, 4, 'g'], [1757, 1322, 3, 'g'], [1763, 1323, 3, 'b'], [1809, 1323, 4, 'g'], [1861, 1320, 5, 'g'], [1871, 1324, 3, 'b'], [1923, 1318, 5, 'g'], [1941, 1324, 3, 'g'], [2018, 1324, 3, 'b'], [2023, 1323, 3, 'b'], [2064, 1325, 2, 'g'],
  [2241, 1323, 5, 'g'], [2250, 1269, 9, 'g'], [2270, 1323, 4, 'g'], [2277, 1322, 4, 'g'], [2289, 1323, 3, 'g'], [2356, 1324, 3, 'b'],
];

const volumeMa = '58,1327 400,1328 826,1327 833,1300 841,1286 848,1276 913,1271 922,1321 957,1324 1017,1322 1050,1324 1100,1323 1144,1323 1198,1322 1229,1323 1237,1320 1292,1317 1303,1324 1380,1324 1390,1326 1745,1326 1765,1324 1780,1327 2243,1327 2255,1322 2295,1320 2299,1326 2376,1327';

const prices = Array.from({ length: 37 }, (_, i) => {
  const price = 2545 - i * 5;
  return { price, y: Math.round(86.5 + i * 34.15) };
});

const times: [string, number][] = [
  ['13:15', 58], ['13:30', 143], ['13:45', 218], ['14:00', 300], ['14:15', 389], ['14:30', 473], ['14:45', 556], ['15:00', 652], ['15:15', 746], ['4', 849], ['09:15', 1071],
  ['09:30', 1324], ['09:45', 1484], ['10:00', 1595], ['10:15', 1707], ['10:30', 1841], ['10:45', 1962], ['11:00', 2065], ['11:15', 2154], ['12:30', 2255], ['12:45', 2385], ['12:53', 2439],
];

const fmt = (p: number) => `2,${String(p - 2000)}.0`;

/* ---------- chart ---------- */

function Plot() {
  return (
    <svg className="h-full w-full" role="img" aria-label="4568 15秒 チャート">
      <g transform="translate(-58 -82)" shapeRendering="crispEdges">
        <rect x="58" y="155" width="792" height="320" fill="#0d0204" />
        <rect x="58" y="267" width="792" height="11" fill="#23060a" />
        <rect x="849" y="711" width="1602" height="417" fill="#0d0204" />
        <rect x="849" y="933" width="1602" height="18" fill="#23060a" />
        {prices.map(({ price, y }) => <rect key={price} x="58" y={y} width="2400" height="1" fill="#fff" fillOpacity="0.05" />)}

        {/* volume */}
        {candles.map((c, i) => (
          <rect key={i} x={c.x} y={1329 - (2 + ((i * 37) % 5))} width="1" height={2 + ((i * 37) % 5)} fill={i % 3 ? '#14286b' : '#242e3e'} />
        ))}
        {volumes.map(([x, y, w, tone]) => <rect key={x} x={x} y={y} width={w} height={1329 - y} fill={tone === 'b' ? '#0d1f57' : '#242e3e'} />)}
        <polyline points={volumeMa} fill="none" stroke="#6b661f" strokeDasharray="1 3" />

        <path d="M841.500 82V1329" stroke="#5f5a24" strokeDasharray="1 3" />
        <rect x="825.500" y="966.500" width="410" height="27" fill="#ff9800" fillOpacity="0.2" stroke="#ff9800" />

        <path d="M58 387.500h85" stroke="#b3a02a" />
        <path d="M58 394.500h415" stroke="#a82834" />
        <path d="M2248 834.500h203" stroke="#b3a02a" />
        <path d="M2252 872.500h199" stroke="#a82834" />

        {candles.map((c, i) => (
          <g key={i} fill={c.color}>
            <rect x={c.x} y={c.high} width="1" height={Math.max(1, c.low - c.high)} />
            {c.width && <rect x={c.x - Math.floor(c.width / 2)} y={c.top} width={c.width} height={Math.max(1, c.bottom! - c.top!)} />}
          </g>
        ))}
        <path d={vwapPath} fill="#3563fa" />
        <path d="M841 913.500H2376" stroke="#a39a45" strokeDasharray="5 6" />

        <rect x="829" y="278" width="10" height="1" fill={UP} />
        <rect x="834" y="277" width="1617" height="2" fill="#00bcd4" />
        <path d="M58 278.500H2451" stroke="#fbc02d" strokeWidth="3" strokeDasharray="3 9" strokeDashoffset="1" />

        <circle cx="849" cy="1118" r="4.500" fill="#8e4684" shapeRendering="auto" />
        <rect x="980" y="1146" width="544" height="16" fill="#222" />
        <g shapeRendering="auto">
          <text x="982" y="1158" fontSize="12" fontWeight="700" fill="#fff">じりさげレンジ</text>
          <text x="473" y="392" fontSize="10" textAnchor="middle" fill="#9c2530">1230</text>
        </g>

        {/* crosshair */}
        <path d="M928.500 82V1329" stroke="#8f97a6" strokeDasharray="5 6" />
        <path d="M58 1195.500H2430" stroke="#8f97a6" strokeDasharray="5 5" />
        <rect x="2430" y="1185" width="21" height="21" fill="#363a45" />
        <g fill="none" stroke="#f0f0f0" shapeRendering="auto">
          <circle cx="2440.500" cy="1195.500" r="8" />
          <path d="M2440.500 1191v9M2436 1195.500h9" />
        </g>
        <rect x="2413" y="927" width="38" height="17" fill="#2962ff" />
        <text x="2432" y="940" fontSize="12" fontWeight="500" textAnchor="middle" fill="#fff">VWAP</text>
        <rect x="2384" y="1320" width="67" height="12" fill="#ffeb3b" />
        <text x="2387" y="1334" fontSize="12" fill="#111">Volume MA</text>
      </g>
    </svg>
  );
}

function PriceAxis() {
  return (
    <svg className="h-full w-full" fontSize="12" fontWeight="500" fill="#dbdbdb" aria-label="価格軸">
      <g transform="translate(0 -82)">
        {prices.map(({ price, y }) => <text key={price} x="8" y={y + 3}>{fmt(price)}</text>)}
        <rect y="270" width="54" height="17" fill="#fbc02d" />
        <text x="8" y="282" fill="#111">2,517.0</text>
        <rect y="927" width="54" height="17" fill="#2962ff" />
        <text x="8" y="940" fill="#fff">2,420.8</text>
        <rect y="944" width="43" height="16" fill="#ffeb3b" />
        <text x="8" y="956" fill="#4a4512">00:10</text>
        <rect y="1185" width="54" height="21" fill="#363a45" />
        <text x="8" y="1199" fill="#fff">2,382.5</text>
        <rect y="1320" width="46" height="12" fill="#ffeb3b" />
        <text x="8" y="1334" fill="#111">2.13K</text>
      </g>
    </svg>
  );
}

function TimeAxis() {
  return (
    <svg className="h-full w-full" fontSize="12" fontWeight="500" fill="#dbdbdb" textAnchor="middle" aria-label="時間軸">
      <g transform="translate(-58 0)">
        {times.map(([t, x]) => <text key={t} x={x} y="17" fontWeight={t === '4' ? 700 : 500}>{t}</text>)}
        <rect x="862" width="134" height="23" fill="#363a45" />
        <text x="900" y="18" fill="#fff">6月 04 (木)</text>
        <text x="963" y="18" fill="#fff">09:06:15</text>
      </g>
    </svg>
  );
}

function Legend() {
  return (
    <div className="absolute top-[3px] left-1.5 text-[#dbdbdb]">
      <div className="flex h-6 items-center">
        <svg width="18" height="18" viewBox="0 0 18 18" className="mr-1.5" aria-hidden="true">
          <circle cx="9" cy="9" r="9" fill="#f4f6fb" />
          <DaiichiLogo />
        </svg>
        <h1 className="text-[15px]">第一三共 · 15秒 · TSE</h1>
        <span className="mx-2 flex size-[18px] items-center justify-center rounded-full bg-[#08221e]">
          <span className="size-2 rounded-full bg-[#42bda8]" />
        </span>
        <span className="text-[13px]">出来高<span className="ml-px text-[#089981]">25.3 K</span></span>
      </div>
      <div className="mt-1 flex items-center">
        <button className="flex h-5 w-8 items-center justify-center gap-0.5 rounded-sm border border-[#4a4a4a] text-xs font-medium">
          <Down size={12} />9
        </button>
        <span className="ml-4 flex size-[18px] items-center justify-center rounded-full bg-[#2a1b47] text-[#a97cf8]">
          <svg width="14" height="14" viewBox="0 0 14 14" fill="none" stroke="currentColor" strokeWidth="1.500" aria-hidden="true">
            <path d="M2 6a5 5 0 0 1 9-2M12 8a5 5 0 0 1-9 2M9 5.500h4L12 3M5 8.500H1L2 11" />
          </svg>
        </span>
      </div>
    </div>
  );
}

function Chart() {
  return (
    <section className="flex min-h-0 flex-1 flex-col overflow-hidden rounded-md border-2 border-[#8c8c8c] bg-black">
      <div className="flex min-h-0 flex-1">
        <div className="relative min-w-0 flex-1 overflow-hidden">
          <Plot />
          <Legend />
          <div className="absolute top-2 right-2.5 flex h-[19px] gap-px text-[10px] font-bold text-white">
            <span className="flex w-[52px] items-center justify-center whitespace-nowrap bg-[#1c1e22]">Daily Gap</span>
            <span className="flex w-[38px] items-center justify-center bg-[#9b3036]">-3.81%</span>
          </div>
          <span className="absolute bottom-1 left-2 text-[#dbdbdb]"><TvMark size={32} /></span>
        </div>
        <div className="w-[58px] shrink-0 overflow-hidden border-l border-[#8c8c8c]"><PriceAxis /></div>
      </div>
      <div className="flex h-[26px] shrink-0 border-t border-[#8c8c8c]">
        <div className="min-w-0 flex-1 overflow-hidden"><TimeAxis /></div>
        <button className="flex w-[58px] shrink-0 items-center justify-center border-l border-[#8c8c8c] text-[#dbdbdb]" title="スケール設定">
          <Ico size={20} d="M9 4.500h10l5 9.500-5 9.500H9L4 14z" dots={[[14, 14, 3.5]]} />
        </button>
      </div>
    </section>
  );
}

/* ---------- bottom bars ---------- */

const ranges = ['1日', '5日', '1ヶ月', '3ヶ月', '6ヶ月', '年初来', '1年', '5年', 'すべて'];

function RangeBar() {
  return (
    <div className="mt-px flex h-[38px] shrink-0 items-center rounded-md bg-[#0f0f0f] pr-1.5 pl-[13px] text-sm whitespace-nowrap text-[#dbdbdb]">
      <div className="flex gap-[11px]">
        {ranges.map((r) => <button key={r}>{r}</button>)}
      </div>
      <Sep className="mx-2.5" />
      <button title="日付へ移動"><Ico d="M5.500 12V8a2 2 0 0 1 2-2h13a2 2 0 0 1 2 2v13a2 2 0 0 1-2 2H16M5.500 10.500h17M9.500 3.500v4M18.500 3.500v4M4 19.500h8M9 16l3.500 3.500L9 23" /></button>
      <div className="flex-1" />
      <button>12:43:35 UTC+9</button>
      <Sep className="mx-2.5" />
      <button>配当調整</button>
      <button className="ml-2 flex size-[34px] items-center justify-center rounded-md bg-[#3d3d3d]" title="折りたたむ"><Ico d="M15.500 6v6.500H22M6.500 16.500h6V23" /></button>
    </div>
  );
}

const quickTools: [string, React.ReactNode][] = [
  ['水平レイ', <Ico d="M8 14.500h17" dots={[[5.5, 14.5, 2]]} />],
  ['レイ', <Ico d="M7 21l5-5.500M14.500 12.500 24 3" dots={[[5.5, 22.5, 2], [13.5, 14, 2]]} />],
  ['トレンド', <Ico d="M6 21 19 7" dots={[[4.5, 22.5, 2], [20, 5.5, 2]]}><rect x="15.500" y="17.500" width="8" height="7" rx="2" /></Ico>],
  ['平行', <Ico d="M6 18 16 8M14 19l10-9M11 23l2-2" dots={[[5, 19.5, 2], [17, 6, 2], [13, 20.5, 2]]} />],
  ['上矢印', <Ico d="M14 5.500 5.500 14.500h5v9h7v-9h5z" />],
  ['価格ラベル', <Ico d="M5.500 2.500h17v14h-17zM14 16.500v4M17 6.500c-5-2-6 3-2.500 3s3 5-3.500 3M14 4.500v10" dots={[[14, 23, 2]]} />],
  ['長方形', <Ico d="M7 5.500h14M7 22.500h14M5.500 7v14M22.500 7v14" dots={[[5.5, 5.5, 1.8], [22.5, 5.5, 1.8], [5.5, 22.5, 1.8], [22.5, 22.5, 1.8]]} />],
  ['グリッド', <Ico d="M4.500 4.500H22M4.500 10.500h19M4.500 16.500h19M6 23.500h17.500M4.500 4.500V22M10.500 4.500v19M16.500 4.500v19M23.500 6v17.500" dots={[[23.5, 4, 1.8], [4.5, 24, 1.8]]} />],
  ['下矢印', <Ico d="M14 23.500 5.500 14.500h5v-9h7v9h5z" />],
  ['日付範囲', <Ico d="M4.500 3v18M23.500 7v18M4.500 14.500h16M17 11.500l3.500 3-3.500 3" dots={[[4.5, 23, 1.8], [23.5, 5, 1.8]]} />],
  ['ロング', <Ico d="M7 5.500h17M4 17.500h20M7 23.500h17M13.500 8.500v5H17" dots={[[5, 5.5, 1.8], [5, 23.5, 1.8]]} />],
  ['価格範囲', <Ico d="M4 4.500h17M8 24.500h16M14.500 22V8M11.500 11l3-3 3 3" dots={[[22.5, 4.5, 1.8], [6, 24.5, 1.8]]} />],
  ['波動', <Ico d="M3 20l6-8M12 11.500l4 5M18 16l6-8M19 8h5v5" dots={[[10.5, 10.5, 1.8], [17, 17.5, 1.8]]} />],
  ['リトレース', <Ico d="M3 4.500h22M3 10.500h20M3 16.500h22M6 22.500h19" dots={[[24.5, 10.5, 1.8], [4.5, 22.5, 1.8]]} />],
  ['ピン', <Ico d="M14 25C8 17 6.500 14 6.500 11a7.500 7.500 0 0 1 15 0c0 3-1.500 6-7.500 14z" dots={[[14, 11, 3.5]]} />],
  ['ショート', <Ico d="M7 5.500h17M4 11.500h20M7 23.500h17M16 15.500c-4-1-4.500 2-2 2s2.500 3.500-2 2.500" dots={[[5, 5.5, 1.8], [5, 23.5, 1.8]]} />],
  ['テキスト', <Ico d="M7.500 8V4.500h13V8M14 4.500v19M11 23.500h6" />],
];

function BottomPanel() {
  return (
    <div className="mt-1 flex h-[38px] shrink-0 items-center rounded-t-md bg-[#0f0f0f] text-sm text-[#dbdbdb]">
      <div className="flex w-[451px] shrink-0 items-center gap-2 pl-2">
        <span className="relative flex size-6 items-center justify-center rounded-md bg-[#2e2e2e] text-white">
          <TvMark size={16} />
          <span className="absolute -top-0.5 -right-0.5 size-1.5 rounded-full bg-[#089981]" />
        </span>
        <button>ペーパートレード</button>
      </div>
      <div className="flex h-full shrink-0 items-center rounded-md bg-[#1f1f1f]">
        <span className="flex w-[25px] justify-center text-[#6b6b6b]">
          <svg width="8" height="14" viewBox="0 0 8 14" fill="currentColor" aria-hidden="true">
            {[0, 5, 10].map((y) => <path key={y} d={`M0 ${y}h2v2H0zM5 ${y}h2v2H5z`} />)}
          </svg>
        </span>
        {quickTools.map(([title, icon]) => (
          <button key={title} title={title} className="flex w-[38px] justify-center">{icon}</button>
        ))}
      </div>
      <div className="flex-1" />
      <button className="flex w-9 justify-center" title="開く"><ChevronUp size={24} strokeWidth={1.2} /></button>
      <button className="mr-px flex w-9 justify-center" title="最大化"><Ico d="M15.500 6.500H22V13M6.500 15.500V22H13" /></button>
    </div>
  );
}

export default function App() {
  return (
    <div className="flex h-screen flex-col overflow-hidden bg-[#2e2e2e] font-['Noto_Sans','Noto_Sans_CJK_JP',sans-serif]">
      <TabBar />
      <Toolbar />
      <div className="mt-1 flex min-h-0 flex-1">
        <LeftTools />
        <main className="mx-1 flex min-w-0 flex-1 flex-col">
          <Chart />
          <RangeBar />
          <BottomPanel />
        </main>
        <RightBar />
      </div>
      <div className="h-0.5 shrink-0 bg-[#1f1c1e]">
        <div className="ml-[196px] h-0.5 w-12 bg-[#4a4a4a]" />
      </div>
    </div>
  );
}
